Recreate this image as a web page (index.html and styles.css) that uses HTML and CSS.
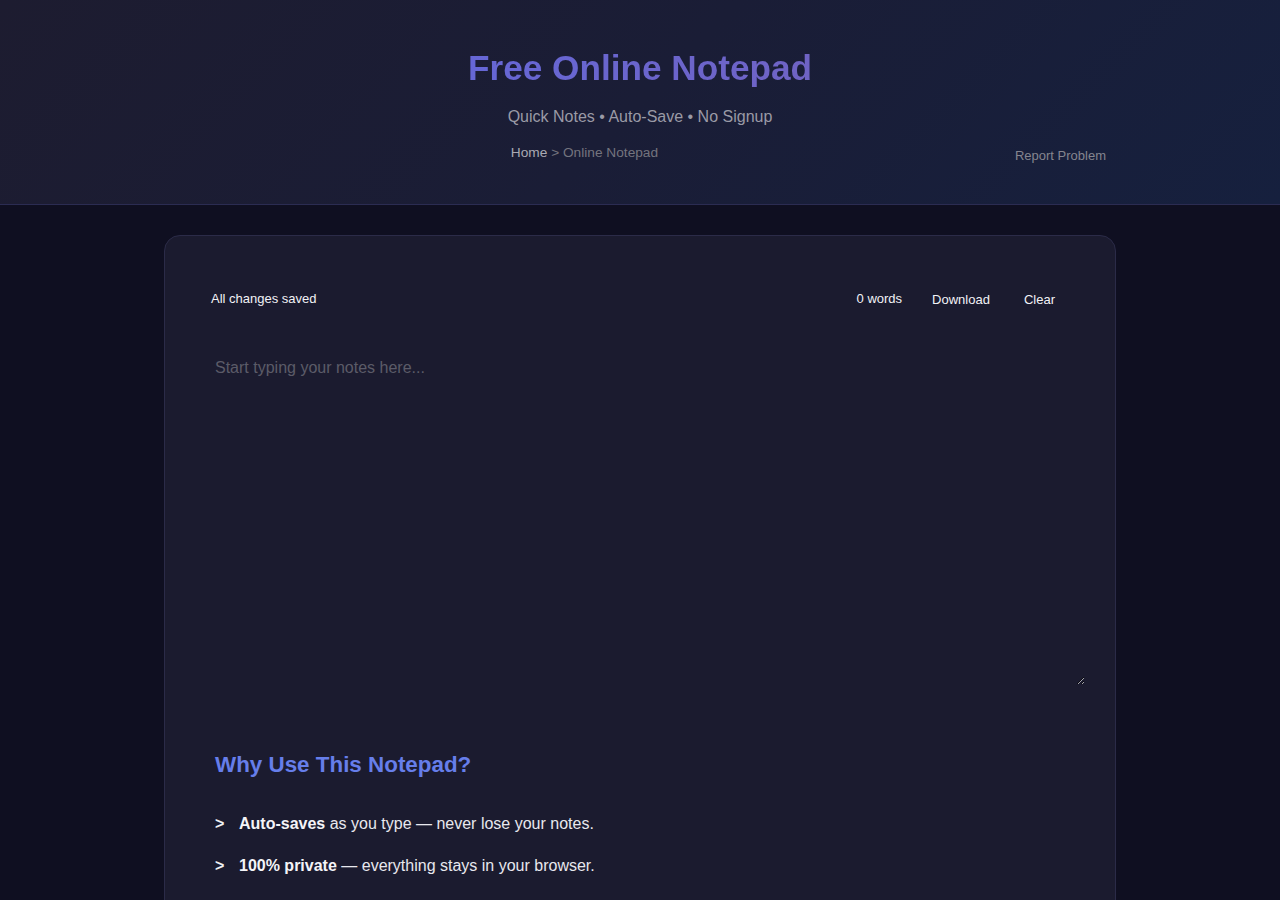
FILE: index.html
```html
<!DOCTYPE html>
<html lang="en">
<head>
<meta charset="utf-8">
<title>Free Online Notepad</title>
<link rel="stylesheet" href="styles.css">
</head>
<body>
<header class="hero">
  <h1 class="title">Free Online Notepad</h1>
  <p class="subtitle">Quick Notes • Auto-Save • No Signup</p>
  <div class="crumb-row">
    <nav class="breadcrumb"><a href="#" class="crumb-home">Home</a> &gt; Online Notepad</nav>
    <a href="#" class="report">Report Problem</a>
  </div>
</header>
<main class="card">
  <div class="toolbar">
    <span class="status">All changes saved</span>
    <div class="tools">
      <span class="count">0 words</span>
      <button class="btn">Download</button>
      <button class="btn">Clear</button>
    </div>
  </div>
  <textarea class="editor" placeholder="Start typing your notes here..."></textarea>
  <section class="why">
    <h2 class="why-title">Why Use This Notepad?</h2>
    <ul class="features">
      <li><span class="arrow">&gt;</span><span><strong>Auto-saves</strong> as you type — never lose your notes.</span></li>
      <li><span class="arrow">&gt;</span><span><strong>100% private</strong> — everything stays in your browser.</span></li>
    </ul>
  </section>
</main>
</body>
</html>
```
FILE: styles.css
```css
* { box-sizing: border-box; }
html, body { margin: 0; padding: 0; }
body {
  background: #0f0f21;
  font-family: "Liberation Sans", Arial, sans-serif;
  color: #e8e8ee;
}
.hero {
  background: linear-gradient(135deg, #1d1c30 0%, #1a1d36 50%, #16203e 100%);
  border-bottom: 1px solid #2b2c52;
  height: 205px;
  padding-top: 47px;
  text-align: center;
}
.title {
  margin: 0;
  font-size: 35.2px;
  line-height: 42px;
  font-weight: 700;
  background: linear-gradient(90deg, #6667d6 0%, #6f63c4 100%);
  -webkit-background-clip: text;
  background-clip: text;
  color: transparent;
  display: inline-block;
}
.subtitle {
  margin: 19px 0 0;
  font-size: 16px;
  line-height: 18px;
  color: #9a9aa6;
}
.crumb-row {
  width: 960px;
  margin: 19px auto 0;
  display: flex;
  align-items: flex-start;
  padding-left: 8px;
}
.breadcrumb {
  flex: 1;
  text-align: center;
  font-size: 13.7px;
  line-height: 16px;
  color: #74747e;
}
.crumb-home { color: #a9a9b3; text-decoration: none; }
.report {
  font-size: 13px;
  line-height: 16px;
  color: #85858f;
  text-decoration: none;
  padding: 3px 14px 0 14px;
}
.card {
  width: 952px;
  margin: 30px auto 0;
  background: #1b1b2f;
  border: 1px solid #2b2b48;
  border-radius: 16px;
  padding: 29px 30px 30px 30px;
}
.toolbar {
  display: flex;
  align-items: center;
  justify-content: space-between;
  padding: 16px;
  height: 66px;
}
.status { font-size: 13px; color: #f2f2f6; }
.tools { display: flex; align-items: center; }
.count { font-size: 13px; color: #f2f2f6; margin-right: 10px; }
.btn {
  background: transparent;
  border: none;
  color: #f2f2f6;
  font-family: "Liberation Sans", Arial, sans-serif;
  font-size: 13px;
  padding: 9px 14px 7px;
  margin-left: 6px;
  cursor: pointer;
}
.editor {
  display: block;
  width: 100%;
  height: 348px;
  margin-top: 6px;
  background: transparent;
  border: none;
  outline: none;
  padding: 22px 20px 20px;
  font-family: "Liberation Sans", Arial, sans-serif;
  font-size: 16px;
  line-height: 18px;
  color: #e8e8ee;
}
.editor::placeholder { color: #5b5b68; }
.why { padding: 67px 20px 0; }
.why-title {
  margin: 0;
  font-size: 22.4px;
  line-height: 26px;
  font-weight: 700;
  color: #667eea;
}
.features { list-style: none; margin: 37px 0 0; padding: 0; }
.features li {
  display: flex;
  font-size: 16px;
  line-height: 18px;
  color: #e8e8ee;
  margin-bottom: 24px;
}
.arrow { width: 24px; font-weight: 700; color: #f0f0f4; }
.features strong { color: #f4f4f8; }
```
